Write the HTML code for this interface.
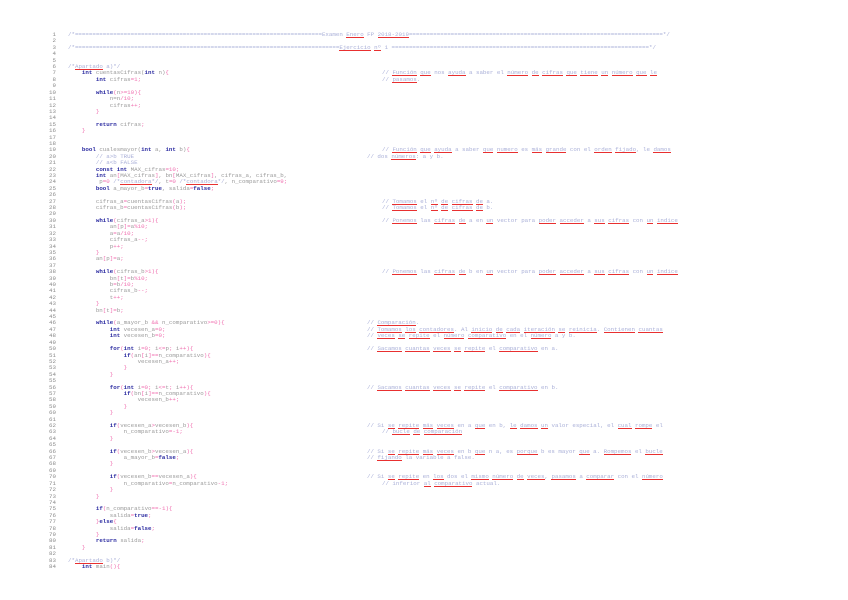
<!DOCTYPE html>
<html><head><meta charset="utf-8"><style>
body{margin:0;background:#fff;width:848px;height:600px;overflow:hidden;position:relative;font-family:"Liberation Mono",monospace;font-size:5.8px;}
.l{position:absolute;left:0;height:6.41px;line-height:6.41px;white-space:pre;color:#9a9a9a;}
.ln{position:absolute;left:30px;width:26px;text-align:right;color:#8a8a8a;}
.t{position:absolute;left:68px;}
.k{color:#2a2aa0;font-weight:bold}
.n{color:#f070b0}
.c{color:#aab0d8}
.s{background:linear-gradient(#e83030,#e83030) left bottom/100% 1px no-repeat}
.r{position:absolute;color:#aab0d8}
</style></head><body>
<div id="w"></div>
<script>
const E=n=>'='.repeat(n);
const L=[
'<span class="c">/*'+E(71)+'Examen <span class="s">Enero</span> FP <span class="s">2018-2019</span>'+E(73)+'*/</span>',
'',
'<span class="c">/*'+E(76)+'<span class="s">Ejercicio</span> <span class="s">nº</span> 1 '+E(74)+'*/</span>',
'','',
'<span class="c">/*<span class="s">Apartado</span> a)*/</span>',
'    <span class="k">int</span> cuentasCifras(<span class="k">int</span> n)<span class="n">{</span>',
'        <span class="k">int</span> cifras<span class="n">=1;</span>',
'',
'        <span class="k">while</span><span class="n">(</span>n<span class="n">&gt;=10){</span>',
'            n=n<span class="n">/10;</span>',
'            cifras<span class="n">++;</span>',
'        <span class="n">}</span>',
'',
'        <span class="k">return</span> cifras<span class="n">;</span>',
'    <span class="n">}</span>',
'','',
'    <span class="k">bool</span> cualesmayor(<span class="k">int</span> a, <span class="k">int</span> b)<span class="n">{</span>',
'        <span class="c">// a&gt;b TRUE</span>',
'        <span class="c">// a&lt;b FALSE</span>',
'        <span class="k">const int</span> MAX_cifras<span class="n">=10;</span>',
'        <span class="k">int</span> an<span class="n">[</span>MAX_cifras<span class="n">]</span>, bn<span class="n">[</span>MAX_cifras<span class="n">]</span>, cifras_a, cifras_b,',
'         p<span class="n">=0</span> <span class="c">/*<span class="s">contadora</span>*/</span>, t<span class="n">=0</span> <span class="c">/*<span class="s">contadora</span>*/</span>, n_comparativo<span class="n">=9;</span>',
'        <span class="k">bool</span> a_mayor_b<span class="n">=</span><span class="k">true</span>, salida<span class="n">=</span><span class="k">false</span><span class="n">;</span>',
'',
'        cifras_a<span class="n">=</span>cuentasCifras<span class="n">(</span>a<span class="n">);</span>',
'        cifras_b<span class="n">=</span>cuentasCifras<span class="n">(</span>b<span class="n">);</span>',
'',
'        <span class="k">while</span><span class="n">(</span>cifras_a<span class="n">&gt;1){</span>',
'            an<span class="n">[</span>p<span class="n">]=</span>a<span class="n">%10;</span>',
'            a<span class="n">=</span>a<span class="n">/10;</span>',
'            cifras_a<span class="n">--;</span>',
'            p<span class="n">++;</span>',
'        <span class="n">}</span>',
'        an<span class="n">[</span>p<span class="n">]=</span>a<span class="n">;</span>',
'',
'        <span class="k">while</span><span class="n">(</span>cifras_b<span class="n">&gt;1){</span>',
'            bn<span class="n">[</span>t<span class="n">]=</span>b<span class="n">%10;</span>',
'            b<span class="n">=</span>b<span class="n">/10;</span>',
'            cifras_b<span class="n">--;</span>',
'            t<span class="n">++;</span>',
'        <span class="n">}</span>',
'        bn<span class="n">[</span>t<span class="n">]=</span>b<span class="n">;</span>',
'',
'        <span class="k">while</span><span class="n">(</span>a_mayor_b <span class="n">&amp;&amp;</span> n_comparativo<span class="n">&gt;=0){</span>',
'            <span class="k">int</span> vecesen_a<span class="n">=0;</span>',
'            <span class="k">int</span> vecesen_b<span class="n">=0;</span>',
'',
'            <span class="k">for</span><span class="n">(</span><span class="k">int</span> i<span class="n">=0;</span> i<span class="n">&lt;=</span>p<span class="n">;</span> i<span class="n">++){</span>',
'                <span class="k">if</span><span class="n">(</span>an<span class="n">[</span>i<span class="n">]==</span>n_comparativo<span class="n">){</span>',
'                    vecesen_a<span class="n">++;</span>',
'                <span class="n">}</span>',
'            <span class="n">}</span>',
'',
'            <span class="k">for</span><span class="n">(</span><span class="k">int</span> i<span class="n">=0;</span> i<span class="n">&lt;=</span>t<span class="n">;</span> i<span class="n">++){</span>',
'                <span class="k">if</span><span class="n">(</span>bn<span class="n">[</span>i<span class="n">]==</span>n_comparativo<span class="n">){</span>',
'                    vecesen_b<span class="n">++;</span>',
'                <span class="n">}</span>',
'            <span class="n">}</span>',
'',
'            <span class="k">if</span><span class="n">(</span>vecesen_a<span class="n">&gt;</span>vecesen_b<span class="n">){</span>',
'                n_comparativo<span class="n">=-1;</span>',
'            <span class="n">}</span>',
'',
'            <span class="k">if</span><span class="n">(</span>vecesen_b<span class="n">&gt;</span>vecesen_a<span class="n">){</span>',
'                a_mayor_b<span class="n">=</span><span class="k">false</span><span class="n">;</span>',
'            <span class="n">}</span>',
'',
'            <span class="k">if</span><span class="n">(</span>vecesen_b<span class="n">==</span>vecesen_a<span class="n">){</span>',
'                n_comparativo<span class="n">=</span>n_comparativo<span class="n">-1;</span>',
'            <span class="n">}</span>',
'        <span class="n">}</span>',
'',
'        <span class="k">if</span><span class="n">(</span>n_comparativo<span class="n">==-1){</span>',
'            salida<span class="n">=</span><span class="k">true</span><span class="n">;</span>',
'        <span class="n">}</span><span class="k">else</span><span class="n">{</span>',
'            salida<span class="n">=</span><span class="k">false</span><span class="n">;</span>',
'        <span class="n">}</span>',
'        <span class="k">return</span> salida<span class="n">;</span>',
'    <span class="n">}</span>',
'',
'<span class="c">/*<span class="s">Apartado</span> b)*/</span>',
'    <span class="k">int</span> main<span class="n">(){</span>'
];
const R={
7:[382,'// <span class="s">Función</span> <span class="s">que</span> nos <span class="s">ayuda</span> a saber el <span class="s">número</span> <span class="s">de</span> <span class="s">cifras</span> <span class="s">que</span> <span class="s">tiene</span> <span class="s">un</span> <span class="s">número</span> <span class="s">que</span> <span class="s">le</span>'],
8:[382,'// <span class="s">pasamos</span>.'],
19:[382,'// <span class="s">Función</span> <span class="s">que</span> <span class="s">ayuda</span> a saber <span class="s">que</span> <span class="s">numero</span> es <span class="s">más</span> <span class="s">grande</span> con el <span class="s">orden</span> <span class="s">fijado</span>, le <span class="s">damos</span>'],
20:[367,'// dos <span class="s">números</span>: a y b.'],
27:[382,'// <span class="s">Tomamos</span> el <span class="s">nº</span> <span class="s">de</span> <span class="s">cifras</span> <span class="s">de</span> a.'],
28:[382,'// <span class="s">Tomamos</span> el <span class="s">nº</span> <span class="s">de</span> <span class="s">cifras</span> <span class="s">de</span> b.'],
30:[382,'// <span class="s">Ponemos</span> las <span class="s">cifras</span> <span class="s">de</span> a en <span class="s">un</span> vector para <span class="s">poder</span> <span class="s">acceder</span> a <span class="s">sus</span> <span class="s">cifras</span> con <span class="s">un</span> <span class="s">indice</span>'],
38:[382,'// <span class="s">Ponemos</span> las <span class="s">cifras</span> <span class="s">de</span> b en <span class="s">un</span> vector para <span class="s">poder</span> <span class="s">acceder</span> a <span class="s">sus</span> <span class="s">cifras</span> con <span class="s">un</span> <span class="s">indice</span>'],
46:[367,'// <span class="s">Comparación</span>.'],
47:[367,'// <span class="s">Tomamos</span> <span class="s">los</span> <span class="s">contadores</span>. Al <span class="s">inicio</span> <span class="s">de</span> <span class="s">cada</span> <span class="s">iteración</span> <span class="s">se</span> <span class="s">reinicia</span>. <span class="s">Contienen</span> <span class="s">cuantas</span>'],
48:[367,'// <span class="s">veces</span> <span class="s">se</span> <span class="s">repite</span> el <span class="s">número</span> <span class="s">comparativo</span> en el <span class="s">número</span> a y b.'],
50:[367,'// <span class="s">Sacamos</span> <span class="s">cuantas</span> <span class="s">veces</span> <span class="s">se</span> <span class="s">repite</span> el <span class="s">comparativo</span> en a.'],
56:[367,'// <span class="s">Sacamos</span> <span class="s">cuantas</span> <span class="s">veces</span> <span class="s">se</span> <span class="s">repite</span> el <span class="s">comparativo</span> en b.'],
62:[367,'// Si <span class="s">se</span> <span class="s">repite</span> <span class="s">más</span> <span class="s">veces</span> en a <span class="s">que</span> en b, <span class="s">le</span> <span class="s">damos</span> <span class="s">un</span> valor especial, el <span class="s">cual</span> <span class="s">rompe</span> el'],
63:[382,'// <span class="s">bucle</span> <span class="s">de</span> <span class="s">comparación</span>'],
66:[367,'// Si <span class="s">se</span> <span class="s">repite</span> <span class="s">más</span> <span class="s">veces</span> en b <span class="s">que</span> n a, es <span class="s">porque</span> b es mayor <span class="s">que</span> a. <span class="s">Rompemos</span> el <span class="s">bucle</span>'],
67:[367,'// <span class="s">fijando</span> la variable a false.'],
70:[367,'// Si <span class="s">se</span> <span class="s">repite</span> en <span class="s">los</span> dos el <span class="s">mismo</span> <span class="s">número</span> <span class="s">de</span> <span class="s">veces</span>, <span class="s">pasamos</span> a <span class="s">comparar</span> con el <span class="s">número</span>'],
71:[382,'// inferior <span class="s">al</span> <span class="s">comparativo</span> actual.']
};
let h='';
L.forEach((s,i)=>{const y=32+i*6.41;
h+=`<div class="l" style="top:${y}px;width:848px"><span class="ln">${i+1}</span><span class="t">${s}</span>`;
if(R[i+1])h+=`<span class="r" style="left:${R[i+1][0]}px">${R[i+1][1]}</span>`;
h+='</div>';});
document.getElementById('w').innerHTML=h;
</script>
</body></html>
